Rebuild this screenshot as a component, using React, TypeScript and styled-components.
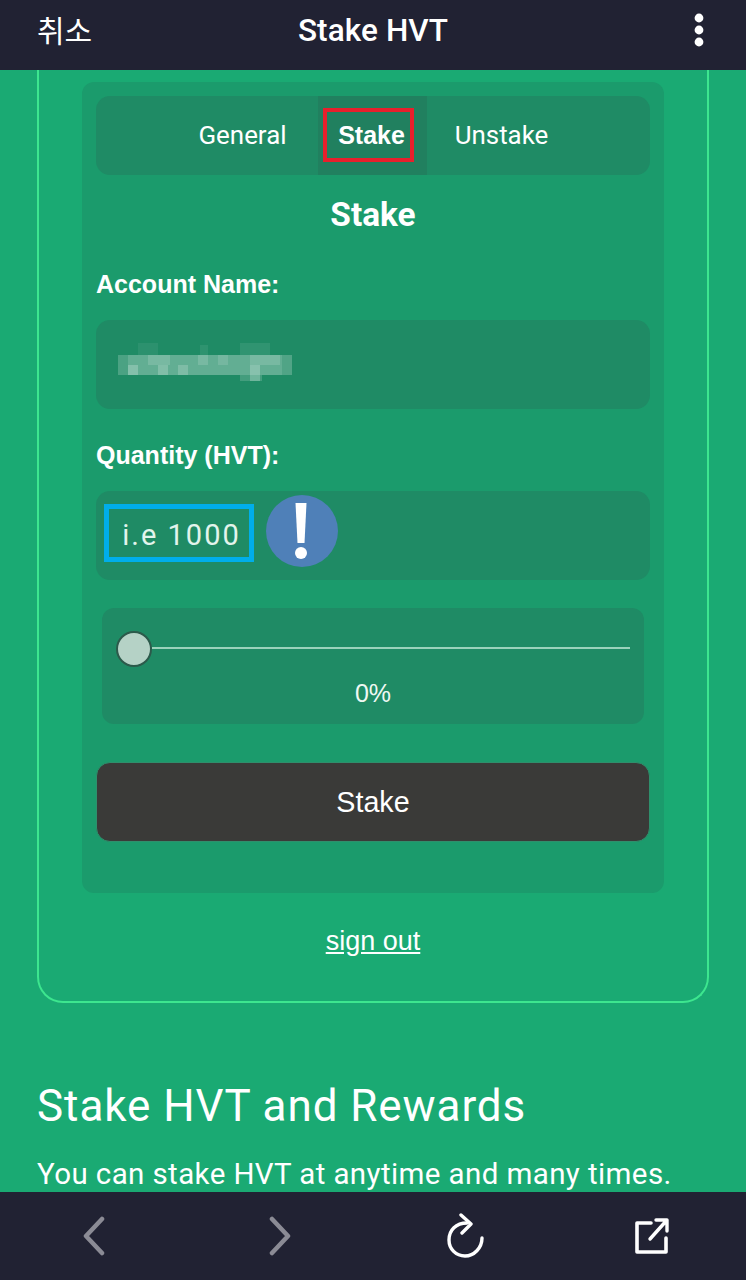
import React from "react";
import styled, { createGlobalStyle } from "styled-components";

const Global = createGlobalStyle`
  html, body { margin: 0; padding: 0; height: 1280px; overflow: hidden; }
  body { font-family: "Liberation Sans", Arial, sans-serif; color: #fff; }
  * { box-sizing: border-box; }
`;

const Page = styled.div`
  width: 746px; height: 1280px; display: flex; flex-direction: column; background: #1aaa73;
`;
const TopBar = styled.header`
  height: 70px; flex: none; background: #212233; display: grid;
  grid-template-columns: 1fr auto 1fr; align-items: center; padding: 0 37px 9px;
`;
const Cancel = styled.span`
  font: 400 30px/1 "Noto Sans CJK KR", sans-serif; margin-top: -4px;
`;
const Title = styled.h1`
  margin: 0; font: 500 31.5px/1 Roboto, sans-serif; letter-spacing: 0.1px;
`;
const Kebab = styled.svg`
  justify-self: end; margin: -1px 5px 0 0; display: block;
`;
const Scroll = styled.main`
  flex: 1; min-height: 0; overflow: hidden; padding: 0 37px;
`;
const OuterCard = styled.section`
  height: 933px; border: 2px solid #3de68f; border-top: none;
  border-radius: 0 0 26px 26px; padding: 12px 43px 0; display: flex; flex-direction: column;
`;
const Panel = styled.div`
  height: 811px; background: #1b9b6c; border-radius: 12px; padding: 14px; flex: none;
`;
const Tabs = styled.nav`
  height: 79px; background: #1f8b65; border-radius: 14px; display: flex; justify-content: center;
  padding-right: 2px;
`;
const Tab = styled.div<{ $active?: boolean; $w: number }>`
  display: flex; align-items: center; justify-content: center; width: ${p => p.$w}px;
  font: 400 25.9px/1 Roboto, sans-serif;
  background: ${p => (p.$active ? "#21805f" : "transparent")};
`;
const HighlightRed = styled.span`
  display: flex; align-items: center; justify-content: center; flex: none; width: 91px; height: 54px; margin: -1px 0 0 -7px;
  border: 4px solid #e8202c; padding-left: 6px; font: 700 25px/1 "Liberation Sans", sans-serif;
`;
const Heading = styled.h2`
  margin: 22px 0 0; text-align: center; font: 700 33.4px/36px Roboto, sans-serif;
`;
const Label = styled.label`
  display: block; font: 700 25px/28px "Liberation Sans", sans-serif;
`;
const FieldBox = styled.div`
  height: 89px; background: #1f8b65; border-radius: 14px; display: flex;
`;
const AccountLabel = styled(Label)`
  margin: 37px 0 22px;
`;
const QuantityLabel = styled(Label)`
  margin: 32px 0 22px;
`;
const AccountField = styled(FieldBox)`
  padding: 23px 0 0 22px; align-items: flex-start;
`;
const BlurredName = styled.svg`
  display: block; filter: blur(0.7px);
`;
const QuantityField = styled(FieldBox)`
  padding-left: 8px; gap: 12px; align-items: flex-start;
`;
const Placeholder = styled.span`
  width: 150px; height: 58px; margin-top: 13px; border: 5px solid #00aeea; display: flex; align-items: center;
  justify-content: center; color: #e2f4ec; font: 400 29px/1 Roboto, sans-serif; letter-spacing: 2px;
  flex: none; padding: 4px 0 0 5px;
`;
const AlertIcon = styled.svg`
  margin-top: 4px; flex: none;
`;
const SliderCard = styled.div`
  margin: 28px 6px 0; height: 116px; background: #1f8b65; border-radius: 12px;
  padding: 23px 14px 0 14px; display: flex; flex-direction: column; align-items: stretch;
`;
const Track = styled.div`
  display: flex; align-items: center; height: 36px;
`;
const Thumb = styled.span`
  width: 36px; height: 36px; border-radius: 50%; background: #b5d2c6; border: 2px solid #2c5a4b; flex: none;
`;
const Rail = styled.span`
  flex: 1; height: 2px; margin-top: -2px; background: #9ad2bb;
`;
const Percent = styled.div`
  margin-top: 12px; text-align: center; font: 400 25px/28px "Liberation Sans", sans-serif; color: #eef8f3;
`;
const StakeButton = styled.button`
  display: block; width: 100%; height: 80px; margin-top: 38px; border-radius: 14px; background: #3a3a38;
  border: 1px solid #2f8f6c; color: #fff; font: 400 28.7px/1 "Liberation Sans", sans-serif;
`;
const SignOut = styled.a`
  display: block; margin-top: 33px; text-align: center; color: #fff; text-decoration: underline;
  font: 400 27px/30px "Liberation Sans", sans-serif;
`;
const Article = styled.article`
  margin-top: 78px;
`;
const ArticleTitle = styled.h2`
  margin: 0; font: 400 44px/50px Roboto, sans-serif; letter-spacing: 0.93px;
`;
const ArticleText = styled.p`
  margin: 25px 0 0; font: 400 29.5px/36px Roboto, sans-serif; white-space: nowrap; letter-spacing: 0.4px;
`;
const BottomBar = styled.footer`
  height: 88px; flex: none; background: #212233; position: relative; z-index: 1;
  display: grid; grid-template-columns: repeat(4, 1fr); align-items: center;
`;
const NavIcon = styled.svg<{ $shift: number }>`
  display: block; justify-self: center; transform: translateX(${p => p.$shift}px);
`;

const pixels: [number, number, number, number, number][] = [
  [0, 12, 10, 20, 0.2], [10, 12, 154, 20, 0.3], [164, 12, 10, 20, 0.22],
  [20, 0, 20, 12, 0.06], [82, 2, 8, 10, 0.07], [122, 0, 30, 12, 0.08],
  [30, 12, 22, 10, 0.14], [80, 12, 10, 10, 0.14], [100, 12, 10, 10, 0.12], [132, 12, 30, 10, 0.14],
  [10, 22, 10, 10, 0.22], [40, 22, 10, 10, 0.2], [60, 22, 10, 10, 0.18],
  [122, 32, 22, 6, 0.16], [132, 22, 10, 16, 0.24],
];

export default function App() {
  return (
    <Page>
      <Global />
      <TopBar>
        <Cancel>취소</Cancel>
        <Title>Stake HVT</Title>
        <Kebab width="10" height="34" viewBox="0 0 10 34" aria-hidden>
          <circle cx="5" cy="5" r="4.4" fill="#fff" />
          <circle cx="5" cy="17" r="4.4" fill="#fff" />
          <circle cx="5" cy="29" r="4.4" fill="#fff" />
        </Kebab>
      </TopBar>

      <Scroll>
        <OuterCard>
          <Panel>
            <Tabs>
              <Tab $w={150}>General</Tab>
              <Tab $w={109} $active><HighlightRed>Stake</HighlightRed></Tab>
              <Tab $w={150}>Unstake</Tab>
            </Tabs>
            <Heading>Stake</Heading>
            <AccountLabel>Account Name:</AccountLabel>
            <AccountField>
              <BlurredName width="174" height="38" viewBox="0 0 174 38" aria-hidden>
                {pixels.map(([x, y, w, h, o], i) => (
                  <rect key={i} x={x} y={y} width={w} height={h} fill="#fff" opacity={o} />
                ))}
              </BlurredName>
            </AccountField>
            <QuantityLabel>Quantity (HVT):</QuantityLabel>
            <QuantityField>
              <Placeholder>i.e 1000</Placeholder>
              <AlertIcon width="72" height="72" viewBox="0 0 72 72" aria-hidden>
                <circle cx="36" cy="36" r="36" fill="#4f80b8" />
                <path d="M29.5 8h11l-2 40h-7z" fill="#fff" />
                <circle cx="35" cy="58" r="6" fill="#fff" />
              </AlertIcon>
            </QuantityField>
            <SliderCard>
              <Track>
                <Thumb />
                <Rail />
              </Track>
              <Percent>0%</Percent>
            </SliderCard>
            <StakeButton>Stake</StakeButton>
          </Panel>
          <SignOut>sign out</SignOut>
        </OuterCard>
        <Article>
          <ArticleTitle>Stake HVT and Rewards</ArticleTitle>
          <ArticleText>You can stake HVT at anytime and many times.</ArticleText>
        </Article>
      </Scroll>

      <BottomBar>
        <NavIcon $shift={0} width="26" height="40" viewBox="0 0 26 40" fill="none" aria-hidden>
          <path d="M22 3 6 20l16 17" stroke="#8b8b95" strokeWidth="4.5" strokeLinecap="round" strokeLinejoin="round" />
        </NavIcon>
        <NavIcon $shift={1} width="26" height="40" viewBox="0 0 26 40" fill="none" aria-hidden>
          <path d="M4 3l16 17L4 37" stroke="#8b8b95" strokeWidth="4.5" strokeLinecap="round" strokeLinejoin="round" />
        </NavIcon>
        <NavIcon $shift={0} width="40" height="46" viewBox="0 0 40 46" fill="none" aria-hidden>
          <path d="M21 10C10 10 3 17 3 27c0 9 7 16 16 16s17-8 17-18" stroke="#fff" strokeWidth="3.4" strokeLinecap="round" />
          <path d="M15 2l10 9-9 9" stroke="#fff" strokeWidth="3.4" strokeLinecap="round" strokeLinejoin="round" />
        </NavIcon>
        <NavIcon $shift={-1} width="36" height="38" viewBox="0 0 36 38" fill="none" aria-hidden>
          <path d="M17 6H3v29h29V21" stroke="#fff" strokeWidth="3.6" strokeLinecap="round" strokeLinejoin="round" />
          <path d="M16 22 33 3M22 3h11v11" stroke="#fff" strokeWidth="3.4" strokeLinecap="round" strokeLinejoin="round" />
        </NavIcon>
      </BottomBar>
    </Page>
  );
}
